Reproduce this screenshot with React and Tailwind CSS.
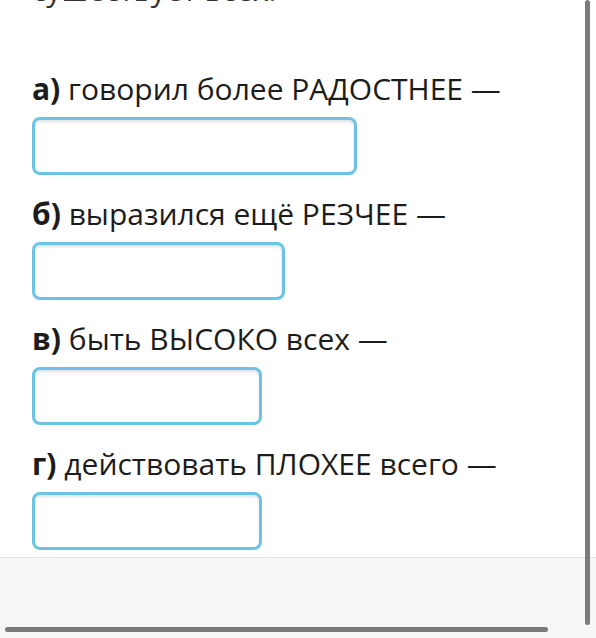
import React from 'react';

const items = [
  { letter: 'а)', text: 'говорил более РАДОСТНЕЕ —', width: 'w-[325px]' },
  { letter: 'б)', text: 'выразился ещё РЕЗЧЕЕ —', width: 'w-[253px]' },
  { letter: 'в)', text: 'быть ВЫСОКО всех —', width: 'w-[230px]' },
  { letter: 'г)', text: 'действовать ПЛОХЕЕ всего —', width: 'w-[230px]' },
];

const App = () => {
  return (
    <div className="relative w-[596px] h-[638px] overflow-hidden bg-white text-[#1c1c1c]" style={{ fontFamily: '"Open Sans", "Noto Sans", sans-serif' }}>
      {/* scrolled content */}
      <div className="h-[557px] overflow-hidden">
        <div className="pl-[32px] mt-[-30px] text-[30px] leading-[40px]">
          <p className="text-[#333]">сушествует всех.</p>
          <div className="mt-[59px]">
            {items.map(item => (
              <div key={item.letter} className="mb-[19px]">
                <p>
                  <span className="font-bold">{item.letter}</span> {item.text}
                </p>
                <input
                  type="text"
                  className={`${item.width} mt-[8px] h-[58px] block rounded-[8px] border-[3px] border-[#6cc3e6] bg-white shadow-[inset_0_2px_3px_rgba(0,0,0,0.12)] outline-none`}
                />
              </div>
            ))}
          </div>
        </div>
      </div>

      {/* footer */}
      <div className="h-[81px] border-t border-[#e1e2e5] bg-[#f5f6f8]"></div>

      {/* scrollbars */}
      <div className="absolute left-[585px] top-0 w-[5px] h-[625px] rounded-full bg-[#7b7b7d]"></div>
      <div className="absolute left-[5px] top-[627px] w-[543px] h-[5px] rounded-full bg-[#7b7b7d]"></div>
    </div>
  );
};

export default App;
